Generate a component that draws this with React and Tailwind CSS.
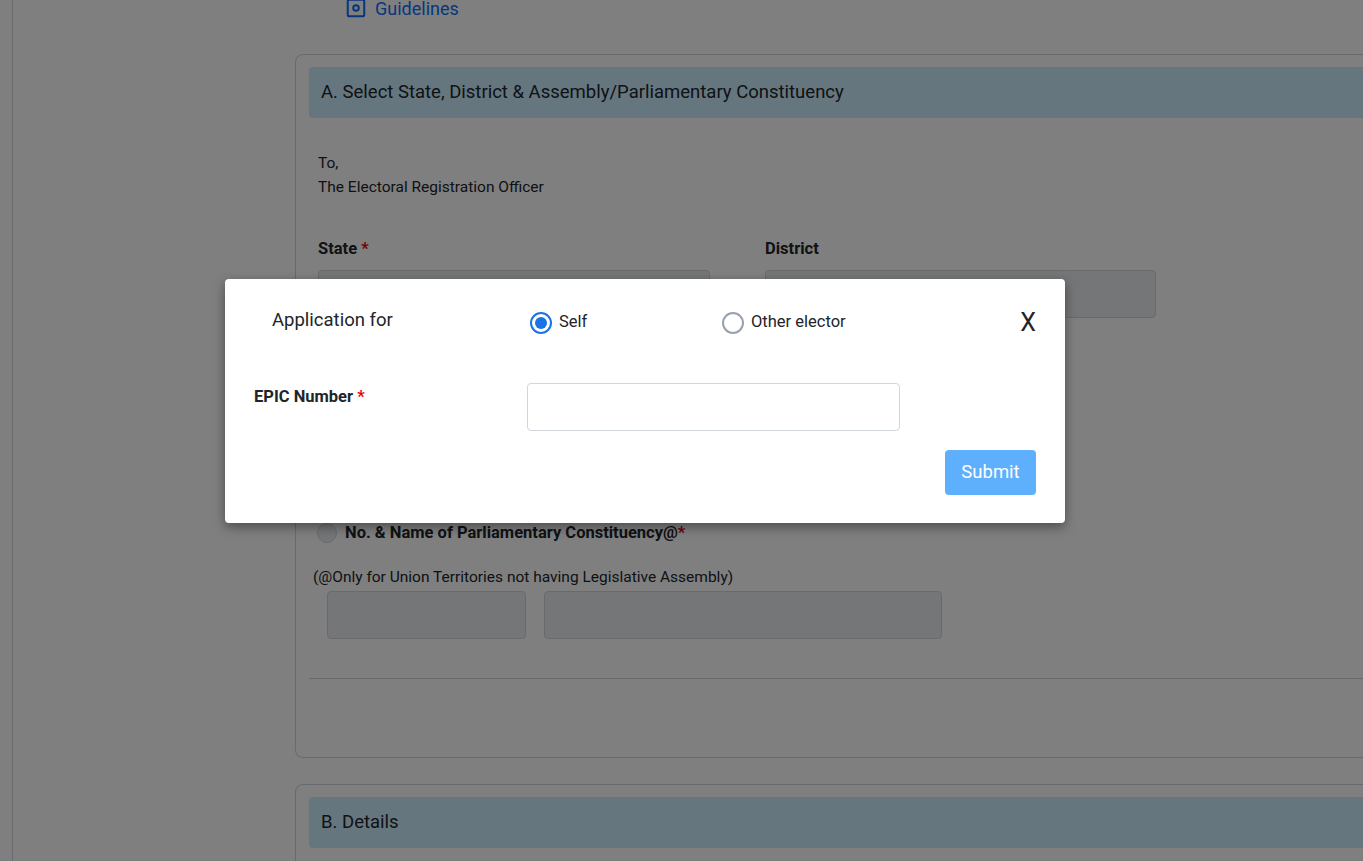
import React from 'react';

function Field({ w }) {
    return <div className={`h-12 rounded border border-gray-300 bg-[#e9ecef] ${w}`} />;
}

export default function App() {
    return (
        <div className="relative h-[861px] overflow-hidden bg-white text-[#212529]" style={{ fontFamily: 'Roboto, "Liberation Sans", sans-serif' }}>
            <div className="flex h-full">
                <div className="w-[13px] shrink-0 border-r border-gray-300" />
                <div className="flex-1 pl-[282px]">
                    {/* Guidelines link */}
                    <div className="-mt-[2px] flex h-[20px] items-center gap-2 pl-[50px] text-[18px] text-[#0d6efd]">
                        <svg width="22" height="22" viewBox="0 0 24 24" fill="none" stroke="currentColor" strokeWidth="2.2">
                            <rect x="3" y="3" width="18" height="18" rx="2" />
                            <circle cx="12" cy="12" r="3" />
                        </svg>
                        Guidelines
                    </div>

                    {/* Card A */}
                    <div className="mt-[36px] h-[704px] rounded-l-lg border border-r-0 border-gray-300 pl-[13px] pt-[12px]">
                        <div className="flex h-[51px] items-center rounded-l bg-[#caecfe] px-3 text-[18.5px]">
                            A. Select State, District &amp; Assembly/Parliamentary Constituency
                        </div>
                        <div className="px-[9px] pt-[33px] text-[15.5px] leading-6">
                            <div>To,</div>
                            <div>The Electoral Registration Officer</div>
                        </div>
                        <div className="mt-[38px] flex gap-[55px] px-[9px]">
                            <div>
                                <div className="mb-2 text-[16.5px] font-bold">State <span className="text-red-600">*</span></div>
                                <Field w="w-[392px]" />
                            </div>
                            <div>
                                <div className="mb-2 text-[16.5px] font-bold">District</div>
                                <Field w="w-[391px]" />
                            </div>
                        </div>
                        <div className="mt-[203px] flex items-center gap-2 px-[8px] text-[16.5px] font-bold">
                            <span className="h-[20px] w-[20px] rounded-full border border-gray-300 bg-[#e9ecef]" />
                            <span>No. &amp; Name of Parliamentary Constituency@<span className="text-red-600">*</span></span>
                        </div>
                        <div className="mt-[20px] px-[4px] text-[15.5px]">(@Only for Union Territories not having Legislative Assembly)</div>
                        <div className="mt-[2px] flex gap-[18px] px-[18px]">
                            <Field w="w-[199px]" />
                            <Field w="w-[398px]" />
                        </div>
                        <div className="mt-[39px] border-t border-gray-300" />
                    </div>

                    {/* Card B */}
                    <div className="mt-[26px] h-[120px] rounded-l-lg border border-r-0 border-gray-300 pl-[13px] pt-[12px]">
                        <div className="flex h-[51px] items-center rounded-l bg-[#caecfe] px-3 text-[18.5px]">B. Details</div>
                    </div>
                </div>
            </div>

            {/* Overlay */}
            <div className="absolute inset-0 bg-black/50" />

            {/* Modal */}
            <div className="absolute left-[225px] top-[279px] w-[840px] rounded bg-white shadow-[0_4px_12px_rgba(0,0,0,0.4)] pb-[28px] pr-[29px]">
                <div className="flex items-center pt-[31px]">
                    <div className="w-[305px] pl-[47px] text-[18.5px] -mt-[3px]">Application for</div>
                    <label className="flex w-[192px] items-center gap-[7px] text-[16.5px]">
                        <span className="flex h-[22px] w-[22px] items-center justify-center rounded-full border-2 border-[#1a73e8]">
                            <span className="h-[12px] w-[12px] rounded-full bg-[#1a73e8]" />
                        </span>
                        Self
                    </label>
                    <label className="flex flex-1 items-center gap-[7px] text-[16.5px]">
                        <span className="h-[22px] w-[22px] rounded-full border-2 border-gray-400" />
                        Other elector
                    </label>
                    <span className="text-[25px] leading-none">X</span>
                </div>
                <div className="mt-[48px] flex">
                    <div className="w-[302px] pl-[29px] pt-[2px] text-[16.5px] font-bold">EPIC Number <span className="text-red-600">*</span></div>
                    <input className="h-[48px] w-[373px] rounded border border-gray-300 bg-white px-3 outline-none" />
                </div>
                <div className="mt-[19px] flex justify-end">
                    <button className="h-[45px] w-[91px] rounded bg-[#5eb0fc] text-[18.5px] text-white">Submit</button>
                </div>
            </div>
        </div>
    );
}
